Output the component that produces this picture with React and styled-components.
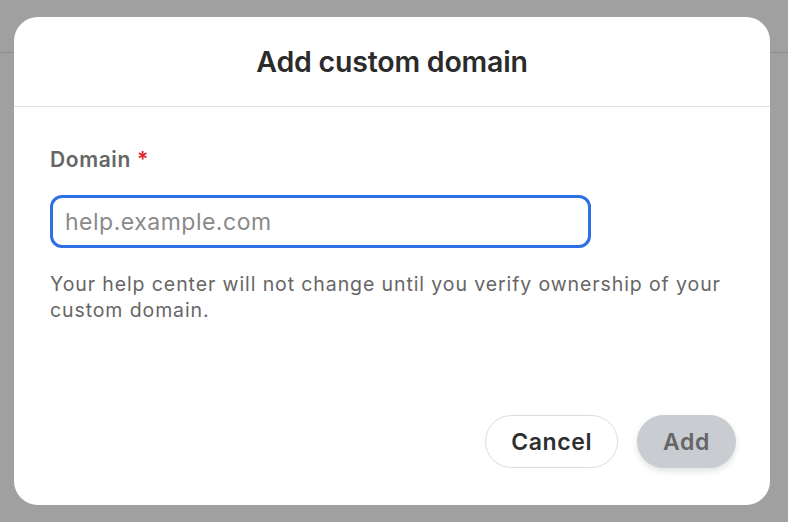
import React from "react";
import styled, { createGlobalStyle } from "styled-components";

const GlobalStyle = createGlobalStyle`
  html, body {
    margin: 0;
    padding: 0;
    width: 788px;
    height: 522px;
    overflow: hidden;
    background: #a0a0a0;
    font-family: Inter, "Noto Sans", "Liberation Sans", sans-serif;
  }
  * { box-sizing: border-box; }
`;

const Page = styled.div`
  width: 788px;
  height: 522px;
  position: relative;
  background: #a0a0a0;
`;

const PageBar = styled.div`
  height: 53px;
  border-bottom: 1px solid #8e8e8e;
`;

const Overlay = styled.div`
  position: absolute;
  inset: 0;
  padding: 17px 0 0 14px;
`;

const Modal = styled.div`
  width: 756px;
  height: 488px;
  background: #fff;
  border-radius: 24px;
  display: flex;
  flex-direction: column;
  overflow: hidden;
`;

const Header = styled.div`
  height: 90px;
  border-bottom: 1px solid #e3e3e6;
  display: flex;
  align-items: center;
  justify-content: center;
`;

const Title = styled.h2`
  margin: 0;
  font-size: 28.5px;
  font-weight: 600;
  color: #2b2b2b;
  letter-spacing: -0.2px;
`;

const Body = styled.div`
  flex: 1;
  padding: 39px 36px 0 36px;
`;

const Label = styled.label`
  display: block;
  font-size: 21px;
  font-weight: 600;
  color: #666;
  line-height: 28px;
  letter-spacing: 0.6px;
`;

const Required = styled.span`
  color: #e0242a;
  margin-left: 6px;
`;

const Input = styled.input`
  display: block;
  margin-top: 21px;
  width: 541px;
  height: 53px;
  border: 3px solid #2f6fe4;
  border-radius: 12px;
  padding: 0 12px;
  font-family: inherit;
  font-size: 23px;
  letter-spacing: 0.5px;
  color: #222;
  caret-color: #000;
  outline: none;
  &::placeholder {
    color: #8a8a8a;
  }
`;

const Help = styled.p`
  margin: 23px 0 0;
  font-size: 19.5px;
  letter-spacing: 0.9px;
  line-height: 26px;
  color: #666;
  max-width: 690px;
`;

const Footer = styled.div`
  display: flex;
  justify-content: flex-end;
  gap: 19px;
  padding: 0 34px 37px 0;
`;

const Button = styled.button`
  height: 53px;
  padding: 0 25px;
  border-radius: 27px;
  font-family: inherit;
  font-size: 23px;
  letter-spacing: 0.6px;
  font-weight: 600;
  border: 1px solid ${(p) => (p.$primary ? "#c9ccd0" : "#dcdcdc")};
  background: ${(p) => (p.$primary ? "#c9ccd0" : "#fff")};
  color: ${(p) => (p.$primary ? "#666" : "#2e2e2e")};
  box-shadow: ${(p) => (p.$primary ? "0 3px 6px rgba(0,0,0,0.12)" : "none")};
  cursor: pointer;
`;

export default function App() {
  return (
    <>
      <GlobalStyle />
      <Page>
        <PageBar />
        <Overlay>
          <Modal>
            <Header>
              <Title>Add custom domain</Title>
            </Header>
            <Body>
              <Label htmlFor="domain">
                Domain<Required>*</Required>
              </Label>
              <Input id="domain" placeholder="help.example.com" autoFocus />
              <Help>
                Your help center will not change until you verify ownership of
                your custom domain.
              </Help>
            </Body>
            <Footer>
              <Button>Cancel</Button>
              <Button $primary disabled>
                Add
              </Button>
            </Footer>
          </Modal>
        </Overlay>
      </Page>
    </>
  );
}
